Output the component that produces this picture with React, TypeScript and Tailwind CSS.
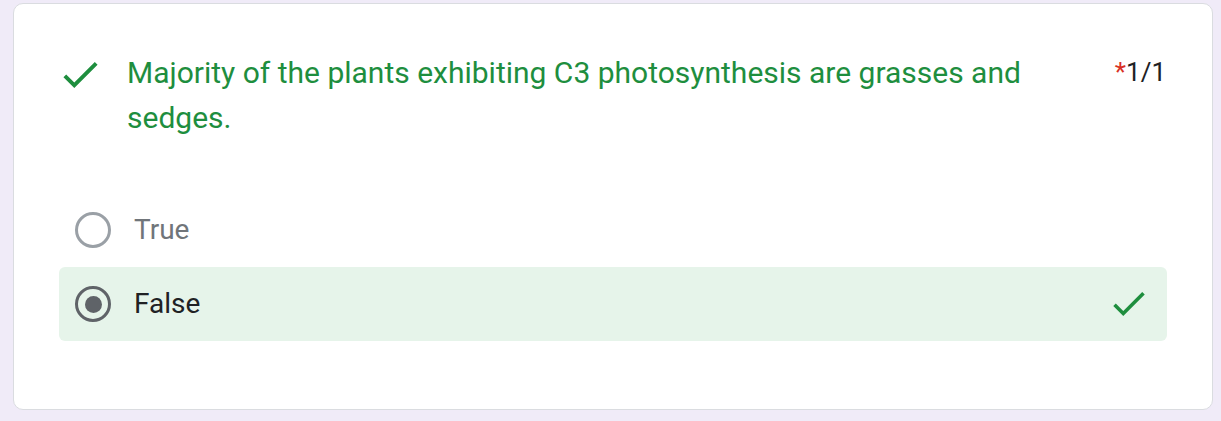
import React from 'react'

function Check({ className }: { className?: string }) {
  return (
    <svg className={className} viewBox="3.41 5.59 17.59 13.41" fill="currentColor" aria-hidden="true">
      <path d="M9 16.17L4.83 12l-1.42 1.41L9 19 21 7l-1.41-1.41z" />
    </svg>
  )
}

function Radio({ checked }: { checked?: boolean }) {
  return (
    <span
      className={
        'flex h-[36px] w-[36px] shrink-0 items-center justify-center rounded-full border-[3px] ' +
        (checked ? 'border-[#5f6368]' : 'border-[#9aa0a6]')
      }
    >
      {checked && <span className="h-[17px] w-[17px] rounded-full bg-[#5f6368]" />}
    </span>
  )
}

export default function App() {
  return (
    <div
      className="min-h-[421px] bg-[#f0ebf8] pl-[13px] pr-[8px] pt-[3px] pb-[12px]"
      style={{ fontFamily: 'Roboto, "Liberation Sans", sans-serif' }}
    >
      <div className="h-[407px] rounded-[10px] border border-[#dadce0] bg-white pl-[45px] pr-[45px] pt-[46px]">
        {/* Question title */}
        <div className="flex items-start pl-[4px] pr-[1px]">
          <Check className="mt-[12px] h-[26px] w-[35px] shrink-0 text-[#1e8e3e]" />
          <div className="ml-[29px] mr-[70px] flex-1 text-[30px] leading-[45px] text-[#1e8e3e]">
            Majority of the plants exhibiting C3 photosynthesis are grasses and sedges.
          </div>
          <div className="shrink-0 text-[26px] leading-[45px] text-[#202124]">
            <span className="text-[#d93025]">*</span>1/1
          </div>
        </div>

        {/* Options */}
        <div className="mt-[53px] flex flex-col">
          <div className="flex h-[74px] items-center rounded-[6px] pl-[16px] pr-[22px]">
            <Radio />
            <span className="ml-[23px] text-[28px] text-[#70757a]">True</span>
          </div>
          <div className="flex h-[74px] items-center rounded-[6px] bg-[#e6f4ea] pl-[16px] pr-[22px]">
            <Radio checked />
            <span className="ml-[23px] flex-1 text-[28px] text-[#202124]">False</span>
            <Check className="h-[24px] w-[32px] text-[#1e8e3e]" />
          </div>
        </div>
      </div>
    </div>
  )
}
